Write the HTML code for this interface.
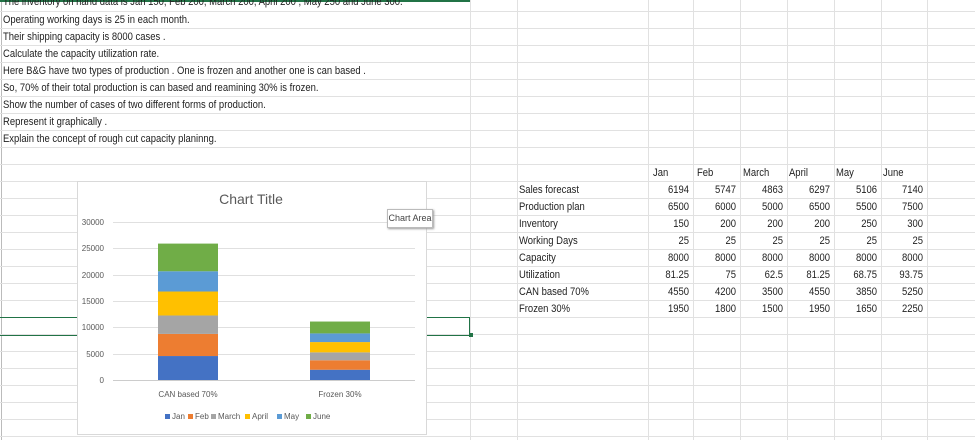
<!DOCTYPE html>
<html><head><meta charset="utf-8"><style>
body{margin:0;width:975px;height:440px;overflow:hidden;background:#fff;font-family:"Liberation Sans",sans-serif;position:relative}
.h{position:absolute;left:0;width:975px;height:1px;background:#e1e1e1}
.v{position:absolute;top:0;height:440px;width:1px;background:#e1e1e1}
.t{position:absolute;font-size:11px;color:#222;white-space:nowrap;line-height:17px;transform:scaleX(0.86);transform-origin:left center}
.r{text-align:right;width:50px;transform-origin:right center}
</style></head><body>
<div class="v" style="left:1px;background:#bbb"></div>
<div class="v" style="left:470px"></div>
<div class="v" style="left:517px"></div>
<div class="v" style="left:648px"></div>
<div class="v" style="left:693px"></div>
<div class="v" style="left:740px"></div>
<div class="v" style="left:787px"></div>
<div class="v" style="left:834px"></div>
<div class="v" style="left:881px"></div>
<div class="v" style="left:927px"></div>
<div id="rows"></div>
<div style="position:absolute;left:0;top:0;width:470px;height:2px;background:#217346"></div>
<div class="t" style="left:3px;top:-6px">The inventory on hand data is Jan 150, Feb 200, March 200, April 200 , May 250 and June 300.</div>
<div class="t" style="left:3px;top:12px">Operating working days is 25 in each month.</div>
<div class="t" style="left:3px;top:29px">Their shipping capacity is 8000 cases .</div>
<div class="t" style="left:3px;top:46px">Calculate the capacity utilization rate.</div>
<div class="t" style="left:3px;top:63px">Here B&amp;G have two types of production . One is frozen and another one is can based .</div>
<div class="t" style="left:3px;top:80px">So, 70% of their total production is can based and reamining 30% is frozen.</div>
<div class="t" style="left:3px;top:97px">Show the number of cases of two different forms of production.</div>
<div class="t" style="left:3px;top:114px">Represent it graphically .</div>
<div class="t" style="left:3px;top:131px">Explain the concept of  rough cut capacity planinng.</div>
<div style="position:absolute;left:0;top:317px;width:469px;height:17px;border:1.5px solid #217346;border-left:none"></div>
<div style="position:absolute;left:469px;top:333px;width:4px;height:4px;background:#217346"></div>
<div id="tbl"></div>
<svg style="position:absolute;left:77px;top:181px" width="351" height="255">
<rect x="0.5" y="0.5" width="349" height="253" fill="#fff" stroke="#d9d9d9"/>
<text x="174" y="23" font-size="14" fill="#595959" text-anchor="middle" font-family="Liberation Sans">Chart Title</text>
<g stroke="#e0e0e0">
<line x1="36" x2="338" y1="41.5" y2="41.5"/><line x1="36" x2="338" y1="67.5" y2="67.5"/><line x1="36" x2="338" y1="94.5" y2="94.5"/><line x1="36" x2="338" y1="120.5" y2="120.5"/><line x1="36" x2="338" y1="146.5" y2="146.5"/><line x1="36" x2="338" y1="173.5" y2="173.5"/><line x1="36" x2="338" y1="199.5" y2="199.5" stroke="#ccc"/>
</g>
<g font-size="8" fill="#595959" text-anchor="end" font-family="Liberation Sans">
<text x="27" y="44">30000</text><text x="27" y="70">25000</text><text x="27" y="97">20000</text><text x="27" y="123">15000</text><text x="27" y="149">10000</text><text x="27" y="176">5000</text><text x="27" y="202">0</text>
</g>
<g id="bars"></g>
<g font-size="8" fill="#595959" text-anchor="middle" font-family="Liberation Sans">
<text x="111" y="216">CAN based 70%</text><text x="263" y="216">Frozen  30%</text>
</g>
<g font-size="8" fill="#595959" font-family="Liberation Sans">
<rect x="88" y="233" width="5" height="5" fill="#4472C4"/><text x="95" y="238">Jan</text>
<rect x="111" y="233" width="5" height="5" fill="#ED7D31"/><text x="118" y="238">Feb</text>
<rect x="134" y="233" width="5" height="5" fill="#A5A5A5"/><text x="141" y="238">March</text>
<rect x="168" y="233" width="5" height="5" fill="#FFC000"/><text x="175" y="238">April</text>
<rect x="200" y="233" width="5" height="5" fill="#5B9BD5"/><text x="207" y="238">May</text>
<rect x="229" y="233" width="5" height="5" fill="#70AD47"/><text x="236" y="238">June</text>
</g>
</svg>
<div style="position:absolute;left:387px;top:209px;width:44px;height:17px;background:#fff;border:1px solid #bbb;box-shadow:1px 1px 2px #999;font-size:9px;color:#444;text-align:center;line-height:17px;white-space:nowrap;overflow:hidden">Chart Area</div>
<script>
var r='';for(var y=11;y<440;y+=17){r+='<div class="h" style="top:'+y+'px"></div>';}
document.getElementById('rows').innerHTML=r;
var cols=[689,736,783,830,877,923],hd=[['Jan',653],['Feb',697],['March',743],['April',789],['May',836],['June',883]];
var data=[['Sales forecast',6194,5747,4863,6297,5106,7140],['Production plan',6500,6000,5000,6500,5500,7500],['Inventory',150,200,200,200,250,300],['Working Days',25,25,25,25,25,25],['Capacity',8000,8000,8000,8000,8000,8000],['Utilization',81.25,75,62.5,81.25,68.75,93.75],['CAN based 70%',4550,4200,3500,4550,3850,5250],['Frozen  30%',1950,1800,1500,1950,1650,2250]];
var s='';hd.forEach(function(h){s+='<div class="t" style="left:'+h[1]+'px;top:165px">'+h[0]+'</div>';});
data.forEach(function(d,i){var top=182+17*i;s+='<div class="t" style="left:519px;top:'+top+'px">'+d[0]+'</div>';for(var j=0;j<6;j++){s+='<div class="t r" style="left:'+(cols[j]-50)+'px;top:'+top+'px">'+d[j+1]+'</div>';}});
document.getElementById('tbl').innerHTML=s;
var colr=['#4472C4','#ED7D31','#A5A5A5','#FFC000','#5B9BD5','#70AD47'],k=158/30000,b='';
[[81,data[6]],[233,data[7]]].forEach(function(p){var base=199;for(var j=0;j<6;j++){var h=p[1][j+1]*k;base-=h;b+='<rect x="'+p[0]+'" y="'+base+'" width="60" height="'+h+'" fill="'+colr[j]+'"/>';}});
document.getElementById('bars').innerHTML=b;
</script>
</body></html>
